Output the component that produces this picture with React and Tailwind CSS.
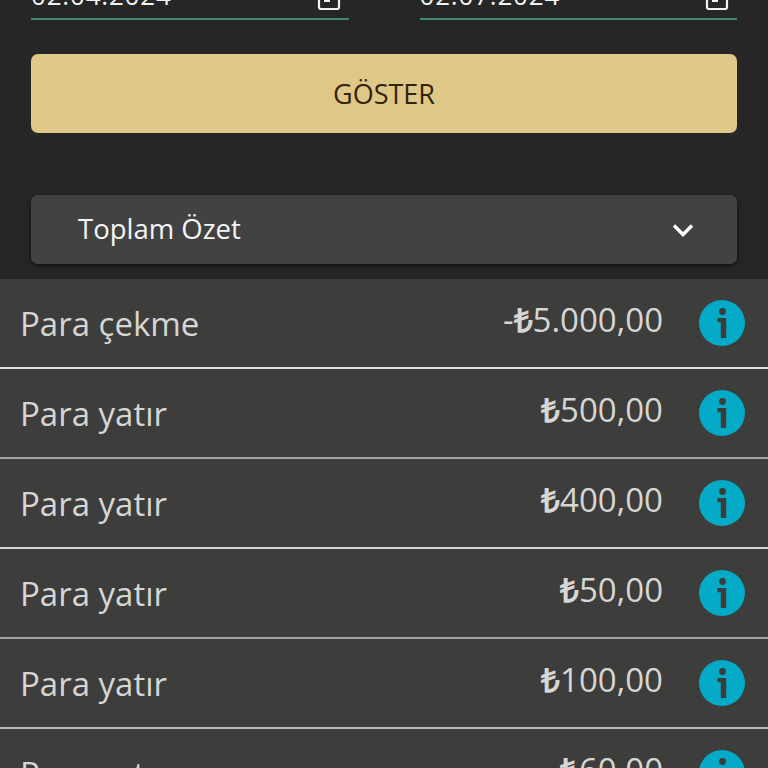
import React from 'react';

const rows = [
    { label: 'Para çekme', sign: '-', lira: '₺', amount: '5.000,00', border: 'border-[#dededc]' },
    { label: 'Para yatır', sign: '', lira: '₺', amount: '500,00', border: 'border-[#a3a3a1]' },
    { label: 'Para yatır', sign: '', lira: '₺', amount: '400,00', border: 'border-[#d6d6d4]' },
    { label: 'Para yatır', sign: '', lira: '₺', amount: '50,00', border: 'border-[#a3a3a1]' },
    { label: 'Para yatır', sign: '', lira: '₺', amount: '100,00', border: 'border-[#bdbdbb]' },
    { label: 'Para yatır', sign: '', lira: '₺', amount: '60,00', border: 'border-transparent' },
];

const CalendarIcon = () => (
    <svg width="24" height="30" viewBox="0 0 24 30" fill="none" className="shrink-0">
        <rect x="2" y="5" width="20" height="23" rx="2" stroke="#f2f2f2" strokeWidth="2.2" />
        <rect x="7" y="15" width="6" height="6" fill="#f2f2f2" />
    </svg>
);

const InfoIcon = () => (
    <svg width="46" height="46" viewBox="0 0 46 46" className="shrink-0">
        <circle cx="23" cy="23" r="23" fill="#04abc6" />
        <circle cx="23.5" cy="11.5" r="3.4" fill="#3c3c3b" />
        <path d="M18.5 18h8.7v20h-5.4v-15.8h-3.3z" fill="#3c3c3b" />
    </svg>
);

const DateField = ({ value }) => (
    <div className="flex-1 h-[68px] border-b-2 border-[#3f8a68] flex items-end justify-between pb-[7px] pr-[8px]">
        <span className="text-[26px] leading-[32px] tracking-[0.8px] text-[#f2f2f2]">{value}</span>
        <CalendarIcon />
    </div>
);

const App = () => {
    return (
        <div className="h-[768px] overflow-hidden bg-[#262626] font-['Open_Sans',sans-serif]">
            <div className="-mt-[48px] px-[31px] pb-[15px]">
                {/* Date range */}
                <div className="flex gap-[71px]">
                    <DateField value="02.04.2024" />
                    <DateField value="02.07.2024" />
                </div>

                <button className="mt-[34px] w-full h-[79px] rounded-[7px] bg-[#dfc788] text-[#33230f] text-[27px] leading-none">
                    GÖSTER
                </button>

                {/* Summary select */}
                <div className="mt-[62px] h-[69px] rounded-[7px] bg-[#424242] shadow-[0_2px_5px_rgba(0,0,0,0.6)] flex items-center justify-between pl-[47px] pr-[42px]">
                    <span className="text-[27.5px] leading-none text-[#f5f5f5] -mt-[2px]">Toplam Özet</span>
                    <svg width="24" height="16" viewBox="0 0 24 16" fill="none">
                        <path d="M3 3.5l9 9 9-9" stroke="#ffffff" strokeWidth="3.4" />
                    </svg>
                </div>
            </div>

            {/* Transactions */}
            <div>
                {rows.map((row, index) => (
                    <div
                        key={index}
                        className={`h-[90px] bg-[#3d3d3c] border-b-2 ${row.border} flex items-center pl-[20px] pr-[23px]`}
                    >
                        <span className="flex-1 text-[33px] leading-none text-[#d6d6d4]">{row.label}</span>
                        <span className="text-[33px] leading-none text-[#d6d6d4] mr-[36px] -mt-[8px]">
                            {row.sign}
                            <span className="font-semibold">{row.lira}</span>
                            {row.amount}
                        </span>
                        <InfoIcon />
                    </div>
                ))}
            </div>
        </div>
    );
};

export default App;
